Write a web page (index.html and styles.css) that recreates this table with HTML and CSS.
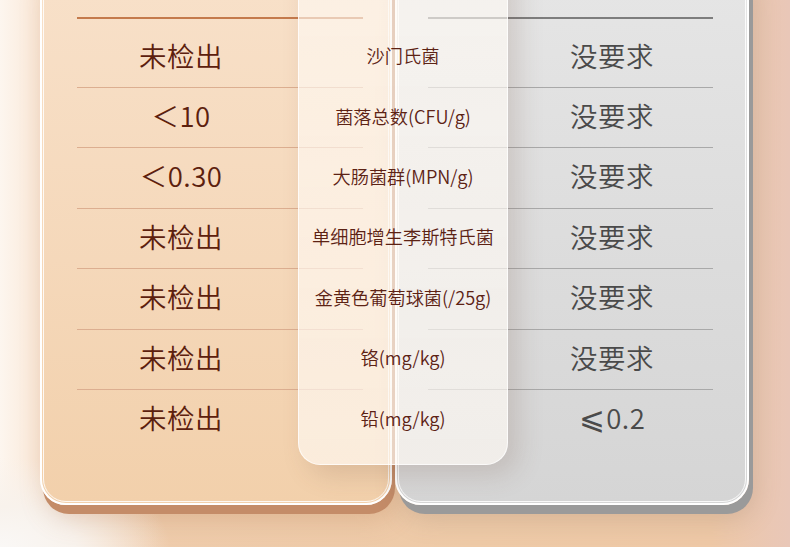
FILE: index.html
```html
<!DOCTYPE html>
<html lang="zh">
<head>
<meta charset="utf-8">
<link rel="stylesheet" href="styles.css">
</head>
<body>
<div class="stage">
  <div class="card card-left">
    <div class="head-line"></div>
    <div class="row first"><span class="val">未检出</span></div>
    <div class="row"><span class="val">＜10</span></div>
    <div class="row"><span class="val">＜0.30</span></div>
    <div class="row"><span class="val">未检出</span></div>
    <div class="row"><span class="val">未检出</span></div>
    <div class="row"><span class="val">未检出</span></div>
    <div class="row last"><span class="val">未检出</span></div>
  </div>
  <div class="card card-right">
    <div class="head-line"></div>
    <div class="row first"><span class="val">没要求</span></div>
    <div class="row"><span class="val">没要求</span></div>
    <div class="row"><span class="val">没要求</span></div>
    <div class="row"><span class="val">没要求</span></div>
    <div class="row"><span class="val">没要求</span></div>
    <div class="row"><span class="val">没要求</span></div>
    <div class="row last"><span class="val"><span class="le">⩽</span>0.2</span></div>
  </div>
  <div class="overlay">
    <div class="row first"><span class="item">沙门氏菌</span></div>
    <div class="row"><span class="item">菌落总数(CFU/g)</span></div>
    <div class="row"><span class="item">大肠菌群(MPN/g)</span></div>
    <div class="row"><span class="item">单细胞增生李斯特氏菌</span></div>
    <div class="row"><span class="item">金黄色葡萄球菌(/25g)</span></div>
    <div class="row"><span class="item">铬(mg/kg)</span></div>
    <div class="row last"><span class="item">铅(mg/kg)</span></div>
  </div>
</div>
</body>
</html>
```
FILE: styles.css
```css
* { box-sizing: border-box; }
html, body { margin: 0; padding: 0; }
body {
  width: 790px;
  height: 547px;
  overflow: hidden;
  font-family: "Noto Sans CJK SC", "Noto Sans", "DejaVu Sans", sans-serif;
  background:
    radial-gradient(ellipse 170px 90px at 0 100%, #faf8f6 0%, #f8f2ec 45%, rgba(248,236,224,0) 100%),
    linear-gradient(90deg, #fdf6ef 0px, #fbede0 25px, #f6dcc4 60px, rgba(240,205,170,0) 160px),
    linear-gradient(90deg, #efcdae 0%, #eecaa7 60%, #eec8a6 90%, #e9c7b8 100%);
}
.stage {
  position: relative;
  display: flex;
  gap: 3px;
  padding-left: 40px;
  margin-top: -40px;
}
.card {
  position: relative;
  height: 545px;
  border: 2px solid #fff;
  border-radius: 26px;
}
.card::before {
  content: "";
  position: absolute;
  inset: 1px;
  border: 1.5px solid rgba(255,255,255,0.85);
  border-radius: 23px;
  pointer-events: none;
}
.card-left {
  width: 352px;
  padding: 55px 0 0 35px;
  background: linear-gradient(180deg, #f8e1ca 0%, #f5d8ba 55%, #f2d0ab 100%);
  box-shadow: 3px 9px 0 #c48c68, 6px 14px 26px rgba(170,110,70,0.25);
}
.card-right {
  width: 354px;
  padding: 55px 0 0 31px;
  background: linear-gradient(180deg, #e6e6e6 0%, #dddddd 50%, #d5d5d5 100%);
  box-shadow: 4px 9px 0 #9a9a9a, 6px 14px 26px rgba(120,100,90,0.22);
}
.head-line { height: 2px; }
.card-left .head-line { width: 286px; background: #c47a4c; }
.card-right .head-line { width: 285px; background: #7d7d7d; }
.row {
  height: 60.4px;
  display: grid;
  align-items: center;
  border-bottom: 1px solid transparent;
}
.row.first { height: 69px; padding-top: 9px; }
.row.last { border-bottom: none; }
.card-left .row {
  width: 286px;
  grid-template-columns: 208px 78px;
  border-bottom-color: #dcae90;
}
.card-right .row {
  width: 285px;
  grid-template-columns: 83px 202px;
  border-bottom-color: #a9a9a9;
}
.card .row.last { border-bottom-color: transparent; }
.val {
  font-size: 27.5px;
  font-weight: 350;
  line-height: 1;
  text-align: center;
  letter-spacing: 0.5px;
  margin-bottom: 4px;
}
.card-left .val { color: #5c200d; grid-column: 1; }
.card-right .val { color: #4a4a4a; grid-column: 2; }
.le {
  font-family: "DejaVu Sans", sans-serif;
  font-weight: 200;
  font-size: 31px;
  margin-right: 1px;
}
.overlay {
  position: absolute;
  left: 298px;
  top: 0;
  width: 210px;
  height: 505px;
  padding-top: 59px;
  border-radius: 0 0 22px 22px;
  background: linear-gradient(180deg, rgba(255,250,244,0.62), rgba(255,250,244,0.66));
  border: 1px solid rgba(255,255,255,0.75);
  border-top: none;
  box-shadow: 10px 10px 26px rgba(110,80,60,0.18);
}
.overlay .row { justify-items: center; }
.item {
  font-size: 18.2px;
  font-weight: 350;
  line-height: 1;
  color: #5c2214;
  margin-bottom: 4px;
}
```
